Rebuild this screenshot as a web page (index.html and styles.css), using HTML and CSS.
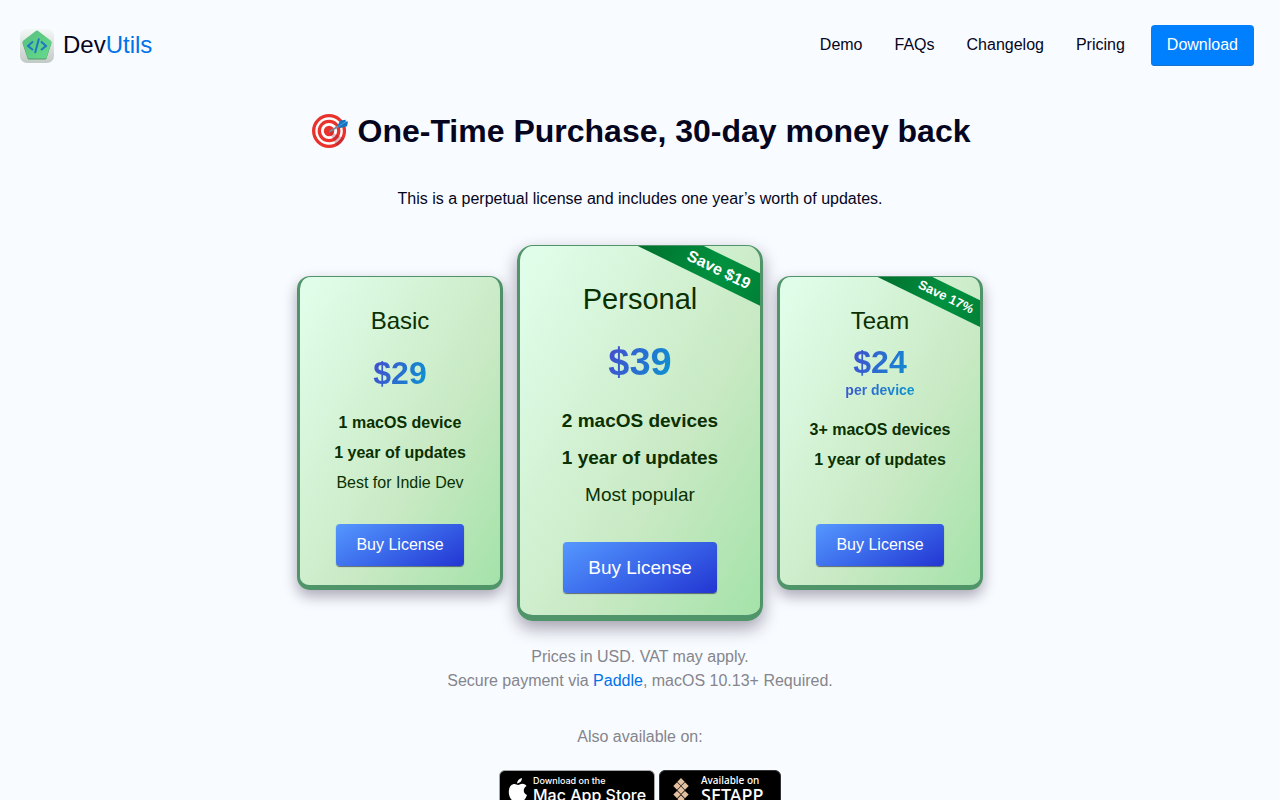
FILE: index.html
```
<!DOCTYPE html>
<html lang="en">
<head>
    <meta charset="UTF-8" />
    <meta name="viewport" content="width=device-width, initial-scale=1" />
    <title>DevUtils - Pricing</title>
    <link rel="stylesheet" href="styles.css">
</head>
<body>
    <header class="header">
        <a href="#" class="logo">
            <svg width="34" height="34" viewBox="0 0 34 34" aria-hidden="true">
                <defs>
                    <linearGradient id="tile" x1="0" y1="0" x2="0" y2="1">
                        <stop offset="0" stop-color="#f3f8f6" />
                        <stop offset="1" stop-color="#c2cac6" />
                    </linearGradient>
                    <linearGradient id="gem" x1="0" y1="0" x2="1" y2="1">
                        <stop offset="0" stop-color="#58c080" />
                        <stop offset="1" stop-color="#66d98c" />
                    </linearGradient>
                </defs>
                <rect width="34" height="34" rx="7" fill="url(#tile)" />
                <path d="M17 4 L30 14 L25 29 H9 L4 14 Z" fill="#4a9c6a" stroke="#4a9c6a" stroke-width="3" stroke-linejoin="round" />
                <path d="M17 3 L30 13 L25 28 H9 L4 13 Z" fill="url(#gem)" stroke="url(#gem)" stroke-width="3" stroke-linejoin="round" />
                <path d="M13 12.500 L8 17 L13 21 M21 12.500 L26 17 L21 21 M19 9.500 L15 24" fill="none" stroke="#1b78c2" stroke-width="2" />
            </svg>
            <span>Dev<span class="logo-accent">Utils</span></span>
        </a>
        <nav class="nav">
            <a href="#">Demo</a>
            <a href="#">FAQs</a>
            <a href="#">Changelog</a>
            <a href="#">Pricing</a>
            <a href="#" class="download">Download</a>
        </nav>
    </header>

    <main class="main">
        <h1>
            <svg width="36" height="36" viewBox="0 0 38 38" aria-hidden="true">
                <circle cx="18" cy="19" r="18" fill="#e8322b" />
                <circle cx="18" cy="19" r="14.500" fill="#fff" />
                <circle cx="18" cy="19" r="12" fill="#e8322b" />
                <circle cx="18" cy="19" r="8.500" fill="#fff" />
                <circle cx="18" cy="19" r="5.500" fill="#e8322b" />
                <path d="M18 19 L34 27 A18 18 0 0 1 26 35 Z" fill="#8d1b35" opacity=".3" />
                <path d="M18 20 L31 12" stroke="#75899a" stroke-width="2" />
                <path d="M27 13 L30 8 L36 7 L35 9 L38 9 L37 14 L29 16 Z" fill="#1674be" />
                <path d="M28 14 L36 9" stroke="#4ba5e8" />
            </svg>
            <span>One-Time Purchase, 30-day money back</span>
        </h1>
        <p class="intro">This is a perpetual license and includes one year’s worth of updates.</p>

        <section class="plans">
            <article class="plan">
                <h2>Basic</h2>
                <div class="price"><span>$29</span></div>
                <ul>
                    <li><strong>1 macOS device</strong></li>
                    <li><strong>1 year of updates</strong></li>
                    <li>Best for Indie Dev</li>
                </ul>
                <button type="button">Buy License</button>
            </article>

            <article class="plan plan-featured">
                <div class="ribbon">Save $19</div>
                <h2>Personal</h2>
                <div class="price"><span>$39</span></div>
                <ul>
                    <li><strong>2 macOS devices</strong></li>
                    <li><strong>1 year of updates</strong></li>
                    <li>Most popular</li>
                </ul>
                <button type="button">Buy License</button>
            </article>

            <article class="plan plan-team">
                <div class="ribbon">Save 17%</div>
                <h2>Team</h2>
                <div class="price"><span>$24<small>per device</small></span></div>
                <ul>
                    <li><strong>3+ macOS devices</strong></li>
                    <li><strong>1 year of updates</strong></li>
                </ul>
                <button type="button">Buy License</button>
            </article>
        </section>

        <p class="note">Prices in USD. VAT may apply.<br>Secure payment via <a href="#">Paddle</a>, macOS 10.13+ Required.</p>
        <p class="note">Also available on:</p>

        <div class="stores">
            <a href="#" class="store">
                <svg width="20" height="24" viewBox="0 0 20 24" aria-hidden="true">
                    <path d="M14 0 C14 3 12 5 9 5.500 C9 3 11 .6 14 0 Z" fill="#fff" />
                    <path d="M10 7 C11.500 7 12.500 5.800 14.500 5.800 C16.300 5.800 17.700 6.800 18.500 8 C14.500 10.500 15.200 15.500 19 17 C18 20 16 23 14 23 C12.500 23 12 22 10 22 C8 22 7.500 23 6 23 C3 23 0 17 1 12 C1.500 8 4 6 6.500 6 C8 6 9 7 10 7 Z" fill="#fff" />
                </svg>
                <span class="store-text"><small>Download on the</small>Mac App Store</span>
            </a>
            <a href="#" class="store store-setapp">
                <svg width="16" height="28" viewBox="0 0 16 28" fill="#e3c0a0" aria-hidden="true">
                    <path d="M8 0 L11.700 3.700 L8 7.400 L4.300 3.700 Z M4 4.300 L7.700 8 L4 11.700 L.3 8 Z M12 4.300 L15.700 8 L12 11.700 L8.300 8 Z M8 8.600 L11.700 12.300 L8 16 L4.300 12.300 Z M4 12.900 L7.700 16.600 L4 20.300 L.3 16.600 Z M12 12.900 L15.700 16.600 L12 20.300 L8.300 16.600 Z M8 17.200 L11.700 20.900 L8 24.600 L4.300 20.900 Z" />
                </svg>
                <span class="store-text"><small>Available on</small>SETAPP</span>
            </a>
        </div>
    </main>
</body>
</html>
```

FILE: styles.css
```
* {
    box-sizing: border-box;
}
body {
    font-family: "Liberation Sans", Arial, sans-serif;
    font-size: 16px;
    line-height: 24px;
    background-color: #f8fbff;
    margin: 0;
    color: #050520;
}
a {
    color: #0072ea;
    text-decoration: none;
}

/* Header */
.header {
    display: flex;
    justify-content: space-between;
    align-items: center;
    padding: 25px 26px 24px 20px;
}
.logo {
    display: flex;
    align-items: center;
    gap: 9px;
    font-size: 24px;
    line-height: 32px;
    color: #050520;
}
.logo span {
    padding-bottom: 2px;
}
.logo-accent {
    color: #0072ea;
}
.nav {
    display: flex;
    align-items: baseline;
    gap: 32px;
}
.nav a {
    color: #050520;
}
.nav .download {
    margin-left: -6px;
    padding: 8px 16px 9px;
    border-radius: 4px;
    background-color: #0080ff;
    box-shadow: inset 0 -1px 0 #1872cc;
    color: #fff;
}

/* Content */
.main {
    padding: 20px 16px 40px;
    text-align: center;
}
h1 {
    display: flex;
    justify-content: center;
    align-items: center;
    gap: 10px;
    margin: 0;
    font-size: 32px;
    line-height: 42px;
}
h1 svg {
    margin-left: 2px;
}
.intro {
    margin: 35px 0 34px;
}

/* Plans */
.plans {
    display: flex;
    justify-content: center;
    align-items: center;
    gap: 14px;
    margin-bottom: 24px;
}
.plan {
    position: relative;
    display: flex;
    flex-direction: column;
    align-items: center;
    width: 206px;
    min-height: 314px;
    padding: 26px 12px 19px;
    border: 3px solid #50946a;
    border-top-width: 1px;
    border-bottom-width: 5px;
    border-radius: 13px;
    background: linear-gradient(120deg, #e0fde9 5%, #c8e9c3 62%, #a4e2a9) padding-box;
    box-shadow: 0 6px 14px rgba(30, 20, 50, 0.36);
    color: #0a3000;
    overflow: hidden;
}
.plan h2 {
    margin: 0 0 10px;
    font-size: 24px;
    font-weight: normal;
    line-height: 36px;
}
.price {
    margin-bottom: 14px;
    font-size: 32px;
    font-weight: bold;
    line-height: 48px;
}
.price span {
    display: block;
    background: linear-gradient(110deg, #4848d0, #0898d0);
    -webkit-background-clip: text;
    background-clip: text;
    color: transparent;
}
.price small {
    display: block;
    font-size: 14px;
    line-height: 20px;
}
.plan ul {
    display: flex;
    flex-direction: column;
    gap: 6px;
    margin: 0;
    padding: 0;
    list-style: none;
}
.plan button {
    width: 128px;
    height: 42px;
    margin-top: auto;
    padding: 0;
    border: none;
    border-radius: 4px;
    background: linear-gradient(150deg, #5598ff, #3a68ea 50%, #2335d2);
    box-shadow: 0 1px 1px rgba(20, 20, 60, 0.6);
    color: #fff;
    font-family: inherit;
    font-size: 16px;
    cursor: pointer;
}
.ribbon {
    position: absolute;
    top: 8px;
    right: -46px;
    width: 160px;
    background: linear-gradient(90deg, #006b2c, #00913f 50%, #007330);
    color: #fff;
    font-size: 13px;
    font-weight: bold;
    transform: rotate(26deg);
}

.plan-team h2 {
    margin-bottom: 5px;
}
.plan-team .price {
    margin-bottom: 18px;
    line-height: 36px;
}

.plan-featured {
    width: 246px;
    min-height: 376px;
    padding: 32px 14px 22px;
    border-bottom-width: 6px;
    border-radius: 16px;
    box-shadow: 0 7px 17px rgba(30, 20, 50, 0.4);
}
.plan-featured h2 {
    margin-bottom: 12px;
    font-size: 29px;
    line-height: 43px;
}
.plan-featured .price {
    margin-bottom: 15px;
    font-size: 38px;
    line-height: 58px;
}
.plan-featured ul {
    gap: 8px;
    font-size: 19px;
    line-height: 29px;
}
.plan-featured button {
    width: 154px;
    height: 51px;
    font-size: 19px;
}
.plan-featured .ribbon {
    top: 9px;
    right: -55px;
    width: 192px;
    font-size: 16px;
    line-height: 29px;
}

/* Footer notes */
.note {
    margin: 0 0 32px;
    color: #85858c;
}
.stores {
    display: flex;
    justify-content: center;
    gap: 4px;
    margin-top: -11px;
}
.store {
    display: flex;
    gap: 5px;
    width: 156px;
    height: 40px;
    padding: 4px 8px;
    border: 1px solid #a6a6a6;
    border-radius: 6px;
    background-color: #000;
    color: #fff;
    font-family: Inter, sans-serif;
    font-size: 16px;
    font-weight: 500;
    line-height: 16px;
    text-align: left;
    white-space: nowrap;
}
.store svg {
    flex-shrink: 0;
    margin-top: 3px;
}
.store small {
    display: block;
    font-size: 9px;
    line-height: 12px;
}
.store-setapp {
    gap: 12px;
    padding: 4px 13px;
    width: 122px;
    border-color: #333;
    font-family: "Noto Sans", sans-serif;
    font-size: 18px;
    line-height: 18px;
}
.store-setapp small {
    font-size: 10px;
    line-height: 11px;
}
```
